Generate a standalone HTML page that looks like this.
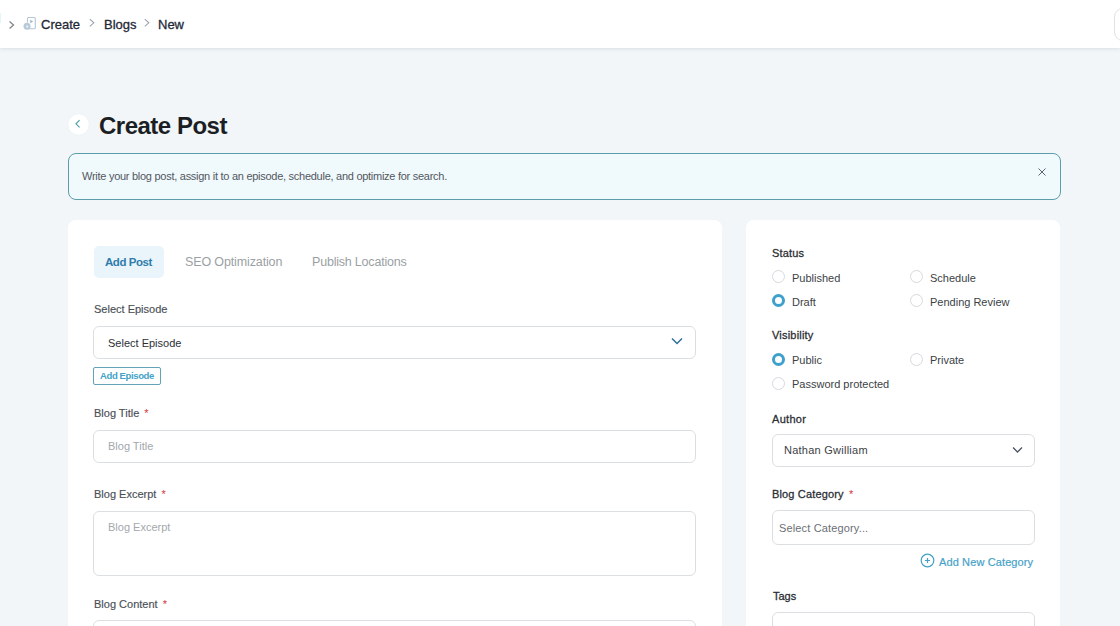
<!DOCTYPE html>
<html><head><meta charset="utf-8">
<style>
*{margin:0;padding:0;box-sizing:border-box}
html,body{width:1120px;height:626px;overflow:hidden}
body{background:#f2f6f9;font-family:"Liberation Sans",sans-serif;position:relative}
.a{position:absolute}
.t{position:absolute;line-height:1;white-space:nowrap}
.hdr{left:0;top:0;width:1120px;height:48px;background:#fff;box-shadow:0 1px 4px rgba(30,70,70,.13)}
.card{background:#fff;border-radius:8px}
.inp{border:1px solid #dcdfe1;border-radius:6px;background:#fff}
.lbl{font-size:11px;color:#4a4f56;-webkit-text-stroke:0.15px #4a4f56}
.rlbl{font-size:11px;color:#2a2e33;-webkit-text-stroke:0.28px #2a2e33}
.req{color:#d23340;-webkit-text-stroke:0;margin-left:2px}
.radio{position:absolute;width:13px;height:13px;border-radius:50%;border:1px solid #d6d9dd;background:#fff}
.radio.on{border:3px solid #3ea0cc}
.opt{font-size:11px;color:#3b3f46}
</style></head><body>

<!-- header -->
<div class="a hdr"></div>
<div class="a" style="left:1114px;top:8px;width:30px;height:33px;border:1px solid #dfe2e5;border-radius:9px;background:#fff"></div>
<div class="a" style="left:0;top:13px;width:1px;height:10px;background:#e3f7fb"></div>
<svg class="a" style="left:8px;top:20px" width="8" height="10" viewBox="0 0 8 10"><path d="M1.5 1.5 L5.5 5 L1.5 8.5" fill="none" stroke="#878b90" stroke-width="1.4"/></svg>
<svg class="a" style="left:22px;top:16px" width="15" height="15" viewBox="0 0 15 15"><path d="M6.5 12.8 H12.2 Q13.3 12.8 13.3 11.7 V2.6 Q13.3 1.5 12.2 1.5 H6.6 Q5.5 1.5 5.5 2.6 V6.5" fill="none" stroke="#b5c5d3" stroke-width="1.1"/><path d="M8.2 3.7 L11.2 5.5 L8.2 7.3 Z" fill="#a3b6c7"/><circle cx="5" cy="10.3" r="3.5" fill="#b7cad9"/><circle cx="5.2" cy="10.6" r="1.1" fill="#eef3f7"/></svg>
<div class="t" style="left:41px;top:18px;font-size:13px;color:#1f2937;-webkit-text-stroke:0.3px #1f2937">Create</div>
<svg class="a" style="left:88px;top:18px" width="8" height="10" viewBox="0 0 8 10"><path d="M1.8 1.2 L5.8 4.8 L1.8 8.4" fill="none" stroke="#9ca3af" stroke-width="1.1"/></svg>
<div class="t" style="left:104px;top:18px;font-size:13px;color:#1f2937;-webkit-text-stroke:0.3px #1f2937">Blogs</div>
<svg class="a" style="left:143px;top:18px" width="8" height="10" viewBox="0 0 8 10"><path d="M1.8 1.2 L5.8 4.8 L1.8 8.4" fill="none" stroke="#9ca3af" stroke-width="1.1"/></svg>
<div class="t" style="left:158px;top:18px;font-size:13px;color:#1e293b;-webkit-text-stroke:0.3px #1e293b">New</div>

<!-- title -->
<div class="a" style="left:67.5px;top:114px;width:21px;height:21px;border-radius:50%;background:#fff;box-shadow:0 0 1px rgba(200,215,225,.6)"></div>
<svg class="a" style="left:74px;top:119px" width="8" height="10" viewBox="0 0 8 10"><path d="M5.6 1.2 L2 4.8 L5.6 8.4" fill="none" stroke="#4f9fae" stroke-width="1.15"/></svg>
<div class="t" style="left:99px;top:114px;font-size:24px;font-weight:bold;letter-spacing:-0.5px;color:#1b1f24">Create Post</div>

<!-- alert -->
<div class="a" style="left:68px;top:153px;width:993px;height:47px;border:1px solid #5b9dab;border-radius:8px;background:#f0fafd"></div>
<div class="t" style="left:82px;top:171px;font-size:11px;letter-spacing:-0.27px;color:#53575d">Write your blog post, assign it to an episode, schedule, and optimize for search.</div>
<svg class="a" style="left:1038px;top:168px" width="8" height="8" viewBox="0 0 8 8"><path d="M0.5 0.5 L7.5 7.5 M7.5 0.5 L0.5 7.5" stroke="#5b6470" stroke-width="1"/></svg>

<!-- left card -->
<div class="a card" style="left:68px;top:220px;width:654px;height:420px"></div>
<div class="a" style="left:94px;top:246px;width:70px;height:31.5px;border-radius:5px;background:#e9f5fb"></div>
<div class="t" style="left:105px;top:257px;font-size:11.5px;font-weight:bold;letter-spacing:-0.45px;color:#2f7cab">Add Post</div>
<div class="t" style="left:185px;top:256px;font-size:12.5px;letter-spacing:-0.13px;color:#9b9fa4">SEO Optimization</div>
<div class="t" style="left:312px;top:256px;font-size:12.5px;letter-spacing:-0.2px;color:#9b9fa4">Publish Locations</div>

<div class="t lbl" style="left:94px;top:304px">Select Episode</div>
<div class="a inp" style="left:93px;top:326px;width:603px;height:33px"></div>
<div class="t" style="left:108px;top:338px;font-size:11px;color:#2b2f36">Select Episode</div>
<svg class="a" style="left:670px;top:336px" width="14" height="10" viewBox="0 0 14 10"><path d="M2 2.5 L7 7.5 L12 2.5" fill="none" stroke="#2e6f96" stroke-width="1.5"/></svg>
<div class="a" style="left:93px;top:367px;width:68px;height:18px;border:1px solid #62a3b8;border-radius:2px;background:#fff"></div>
<div class="t" style="left:100px;top:371px;font-size:9.5px;font-weight:bold;letter-spacing:-0.38px;color:#42a2c8">Add Episode</div>

<div class="t lbl" style="left:94px;top:408px">Blog Title <span class="req">*</span></div>
<div class="a inp" style="left:93px;top:430px;width:603px;height:33px"></div>
<div class="t" style="left:108px;top:441px;font-size:11px;color:#a4a8ac">Blog Title</div>

<div class="t lbl" style="left:94px;top:489px">Blog Excerpt <span class="req">*</span></div>
<div class="a inp" style="left:93px;top:511px;width:603px;height:65px"></div>
<div class="t" style="left:108px;top:522px;font-size:11px;color:#a4a8ac">Blog Excerpt</div>

<div class="t lbl" style="left:94px;top:599px">Blog Content <span class="req">*</span></div>
<div class="a inp" style="left:93px;top:620px;width:603px;height:40px"></div>

<!-- right card -->
<div class="a card" style="left:746px;top:220px;width:314px;height:420px"></div>
<div class="t rlbl" style="left:772px;top:248px;letter-spacing:0.15px">Status</div>
<div class="radio" style="left:772px;top:270px"></div>
<div class="t opt" style="left:792px;top:272.6px">Published</div>
<div class="radio" style="left:910px;top:270px"></div>
<div class="t opt" style="left:930px;top:272.6px">Schedule</div>
<div class="radio on" style="left:772px;top:294px"></div>
<div class="t opt" style="left:792px;top:296.6px">Draft</div>
<div class="radio" style="left:910px;top:294px"></div>
<div class="t opt" style="left:930px;top:296.6px">Pending Review</div>

<div class="t rlbl" style="left:772px;top:330px;letter-spacing:0.2px">Visibility</div>
<div class="radio on" style="left:772px;top:353px"></div>
<div class="t opt" style="left:792px;top:354.6px">Public</div>
<div class="radio" style="left:910px;top:353px"></div>
<div class="t opt" style="left:930px;top:354.6px">Private</div>
<div class="radio" style="left:772px;top:377px"></div>
<div class="t opt" style="left:792px;top:378.6px">Password protected</div>

<div class="t rlbl" style="left:772px;top:413.5px;letter-spacing:0.3px">Author</div>
<div class="a inp" style="left:772px;top:434px;width:263px;height:33px"></div>
<div class="t" style="left:784px;top:445px;font-size:11px;letter-spacing:0.25px;color:#3d4147">Nathan Gwilliam</div>
<svg class="a" style="left:1010px;top:445px" width="14" height="10" viewBox="0 0 14 10"><path d="M3 2.5 L7.5 7 L12 2.5" fill="none" stroke="#4b5563" stroke-width="1.3"/></svg>

<div class="t rlbl" style="left:772px;top:489px;letter-spacing:0.15px">Blog Category <span class="req">*</span></div>
<div class="a inp" style="left:772px;top:510px;width:263px;height:35px"></div>
<div class="t" style="left:779px;top:523px;font-size:11px;letter-spacing:0.15px;color:#6b6f75">Select Category...</div>
<svg class="a" style="left:920px;top:553px" width="15" height="15" viewBox="0 0 15 15"><circle cx="7.5" cy="7.5" r="6.3" fill="none" stroke="#45a0c4" stroke-width="1.2"/><path d="M7.5 5 V10 M5 7.5 H10" stroke="#45a0c4" stroke-width="1.2"/></svg>
<div class="t" style="left:939px;top:556.5px;font-size:11px;letter-spacing:0.12px;color:#45a2c7;-webkit-text-stroke:0.2px #45a2c7">Add New Category</div>

<div class="t rlbl" style="left:773px;top:591px">Tags</div>
<div class="a inp" style="left:772px;top:611.5px;width:263px;height:40px"></div>

</body></html>
